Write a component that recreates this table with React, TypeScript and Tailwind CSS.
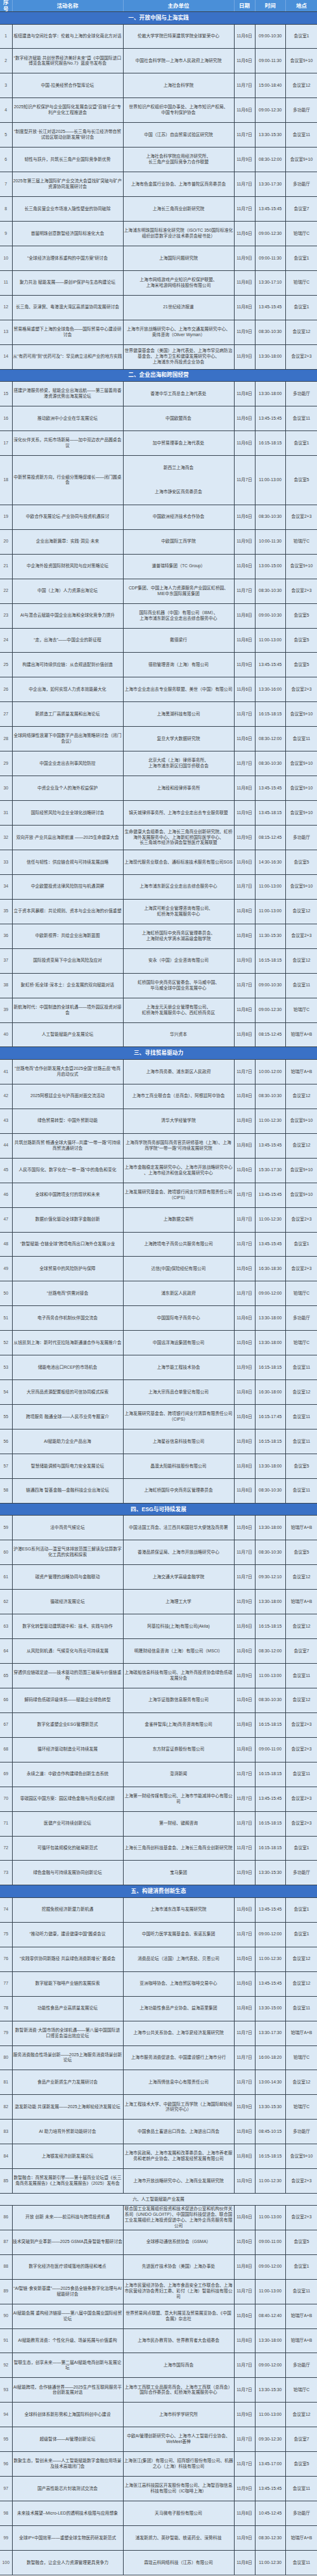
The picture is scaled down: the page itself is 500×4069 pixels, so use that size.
import React from "react";

type Row = [string, string, string, string, string, string];
type Item = { sec: string; light?: boolean } | { row: Row; split?: [string, string] };

const S = (sec: string, light?: boolean): Item => ({ sec, light });
const R = (n: string, t: string, o: string, d: string, tm: string, p: string): Item => ({ row: [n, t, o, d, tm, p] });

const data: Item[] = [
  S("一、开放中国与上海实践"),
  R("1", "枢纽建造与空间社会学：伦敦与上海的全球化南北方对话", "伦敦大学学院巴特莱建筑学院全球繁荣中心", "11月6日", "09:00-10:30", "会议室1"),
  R("2", "“数字经济赋能 共创世界经济美好未来”暨《中国国际进口\n博览会发展研究报告No.7》蓝皮书发布会", "中国社会科学院—上海市人民政府上海研究院", "11月6日", "09:00-11:30", "会议室9+10"),
  R("3", "中国-拉美经贸合作智库论坛", "上海社会科学院", "11月7日", "15:00-18:40", "会议室12"),
  R("4", "2025知识产权保护与企业国际化发展会议暨“百链千企”专\n利产业化工程推进会", "世界知识产权组织中国办事处、上海市知识产权局、\n中国专利保护协会", "11月6日", "09:00-12:30", "多功能厅"),
  R("5", "“制度型开放·长江对话2025——长三角与长江经济带自贸\n试验区联动创新发展”研讨会", "中国（江苏）自由贸易试验区研究院", "11月7日", "13:30-15:30", "会议室11"),
  R("6", "韧性与跃升，共筑长三角产业国际竞争新优势", "上海社会科学院应用经济研究所、\n长三角产业国际竞争力合作联盟", "11月9日", "08:30-12:00", "会议室9+10"),
  R("7", "2025年第三届上海国际矿产业交流大会暨找矿突破与矿产\n资源协同发展研讨会", "上海有色金属行业协会、上海市普陀区商务委员会", "11月7日", "13:30-17:30", "多功能厅"),
  R("8", "长三角民营企业市场准入隐性壁垒的协同破除", "上海长三角商业创新研究院", "11月7日", "13:45-15:45", "会议室7"),
  R("9", "首届明珠创意数智经济国际标准化大会", "上海浦东明珠国际标准化研究院（ISO/TC 350国际标准化\n组织创意数字设计技术委员会秘书处）", "11月6日", "09:00-12:30", "铂瑞厅C"),
  R("10", "“全球经济治理体系重构的中国方案”研讨会", "上海国际问题研究院", "11月9日", "09:00-11:30", "会议室1"),
  R("11", "聚力共治 赋能发展——原创IP保护与生态构建论坛", "上海市网络游戏产业知识产权保护联盟、\n上海米哈游网络科技股份有限公司", "11月8日", "13:30-17:10", "铂瑞厅C"),
  R("12", "长三角、京津冀、粤港澳大湾区高质量协同发展研讨会", "21世纪经济报道", "11月8日", "13:45-15:45", "会议室1"),
  R("13", "贸易格局重塑下上海的全球角色——国际贸易中心建设研\n讨会", "上海市开放战略研究中心、上海市交通发展研究中心、\n奥纬咨询（Oliver Wyman）", "11月9日", "08:30-10:30", "会议室12"),
  R("14", "从“有药可用”到“优药可及”：罕见病立法和产业的地方实践", "世界健康基金会（美国）上海代表处、上海市罕见病防治\n基金会、上海市卫生和健康发展研究中心、\n上海浦东外商投资企业协会", "11月9日", "13:30-18:00", "会议室2+3"),
  S("二、企业出海和跨国经营"),
  R("15", "搭建沪港服务桥梁，赋能企业出海远航——第三届善用香\n港资源优势出海发展论坛", "香港中华工商总会上海代表处", "11月8日", "13:30-18:00", "多功能厅"),
  R("16", "推动欧洲中小企业在华发展论坛", "中国欧盟商会", "11月6日", "13:45-15:45", "会议室11"),
  R("17", "深化伙伴关系，共拓市场新局——加中双边农产品圆桌会\n议", "加中贸易理事会上海代表处", "11月6日", "16:15-18:15", "会议室1"),
  { row: ["18", "中新贸易投资新方向，行业细分策略促增长——闭门圆桌\n会", "", "11月7日", "11:00-13:00", "会议室5"], split: ["新西兰上海商会", "上海市静安区商务委员会"] },
  R("19", "中欧合作发展论坛-产业协同与投资机遇探讨", "中国欧洲经济技术合作协会", "11月6日", "08:30-10:30", "会议室2+3"),
  R("20", "企业出海新篇章：实践·洞见·未来", "中欧国际工商学院", "11月9日", "10:00-11:30", "铂瑞厅C"),
  R("21", "中企海外投资国际财税风险与应对策略论坛", "道普瑞特集团（TC Group）", "11月6日", "13:00-15:00", "会议室9+10"),
  R("22", "中国（上海）人力资源出海论坛", "CDP集团、中国上海人力资源服务产业园区虹桥园、\nMIE中东国际展览集团", "11月7日", "08:30-10:30", "会议室2+3"),
  R("23", "AI与混合云赋能中国企业出海和全球化竞争力提升", "国际商业机器（中国）有限公司（IBM）、\n上海市浦东新区企业走出去综合服务中心", "11月8日", "09:00-10:30", "会议室5"),
  R("24", "“走，出海去”——中国企业的新征程", "戴德梁行", "11月8日", "11:00-13:00", "会议室5"),
  R("25", "构建出海可持续供应链：从合规适配到价值创造", "德勤管理咨询（上海）有限公司", "11月9日", "13:45-15:45", "会议室5"),
  R("26", "中企出海，如何实现人力资本效能最大化", "上海市企业走出去专业服务联盟、美世（中国）有限公司", "11月6日", "13:30-16:00", "会议室2+3"),
  R("27", "新质造工厂高质量发展和出海论坛", "上海黑湖科技有限公司", "11月7日", "16:15-18:15", "会议室9+10"),
  R("28", "全球网络弹性浪潮下中国数字产品出海策略研讨会（闭门\n会议）", "复旦大学大数据研究院", "11月6日", "08:30-12:00", "会议室11"),
  R("29", "中国企业走出去刑事风险防控", "北京大成（上海）律师事务所、\n上海市浦东新区归国华侨联合会", "11月7日", "08:30-10:30", "会议室9+10"),
  R("30", "中资企业及个人的海外权益保护", "上海段和段律师事务所", "11月8日", "13:45-15:45", "会议室9+10"),
  R("31", "国际经贸风险与企业全球化战略研讨会", "锦天城律师事务所、上海市企业走出去专业服务联盟", "11月9日", "13:45-18:15", "会议室9+10"),
  R("32", "双向开放·产业共赢出海新航道 ——2025生命健康大会", "生命健康大会组委会、上海长三角商业创新研究院、虹桥\n海外发展服务中心、上海新虹桥国际医学中心、\n长三角城市经济协调会智慧医疗发展联盟", "11月9日", "08:15-12:45", "多功能厅"),
  R("33", "信任与韧性：供应链合规与可持续发展战略", "上海现代服务业联合会、通标标准技术服务有限公司SGS", "11月6日", "14:30-16:30", "会议室5"),
  R("34", "中企欧盟投资法律风险防控与机遇洞察", "上海市浦东新区企业走出去综合服务中心", "11月7日", "11:00-13:00", "会议室9+10"),
  R("35", "立于资本风暴眼：共论规则、资本与企业出海的价值重塑", "上海宾可斯企业管理咨询有限公司、\n虹桥海外发展服务中心", "11月8日", "11:00-13:00", "会议室12"),
  R("36", "中欧新视界：共绘企业出海新蓝图", "上海虹桥国际中央商务区管理委员会、\n上海财经大学滴水湖高级金融学院", "11月8日", "11:30-15:30", "会议室2+3"),
  R("37", "国际投资变局下中企出海风险及应对", "安永（中国）企业咨询有限公司", "11月9日", "16:15-18:15", "会议室12"),
  R("38", "聚虹桥·拓全球·深本土：企业发展的双向赋能对话", "虹桥国际中央商务区管委会、毕马威中国、\n毕马威全球中国业务发展中心", "11月7日", "09:00-10:30", "会议室11"),
  R("39", "新航海时代：中国制造的全球机遇——境外园区投资对接\n会", "上海龙元天册企业管理有限公司、\n虹桥海外发展服务中心、西虹桥商务区", "11月8日", "09:00-12:30", "铂瑞厅C"),
  R("40", "人工智能赋能产业发展论坛", "华兴资本", "11月8日", "08:15-12:45", "铂瑞厅A+B"),
  S("三、寻找贸易驱动力"),
  R("41", "“丝路电商”合作创新发展大会暨2025全国“丝路云品”电商\n月启动仪式", "上海市商务委、浦东新区人民政府", "11月7日", "10:00-12:00", "铂瑞厅A+B"),
  R("42", "2025阿根廷企业与沪商面对面交流活动", "上海市工商业联合会（总商会）、阿根廷阿中协会", "11月8日", "08:30-10:30", "会议室12"),
  R("43", "绿色贸易转型：中国外贸新动能", "清华大学经管学院", "11月8日", "11:00-12:30", "会议室9+10"),
  R("44", "共筑丝路新商贸 畅通全球大循环--共建“一带一路”可持续\n商贸流通研讨会", "上海商学院商务部国际商务官员研修基地（上海）、上海\n商学院“一带一路”可持续发展研究院", "11月8日", "13:45-15:45", "会议室12"),
  R("45", "人民币国际化、数字化在“一带一路”中的角色和变化", "上海市金融稳定发展研究中心、上海市开放战略研究中心\n、上海市经济和信息化发展研究中心", "11月6日", "15:30-17:30", "会议室9+10"),
  R("46", "全球和中国跨境支付的现状和未来", "上海发展研究基金会、跨境银行间支付清算有限责任公司\n（CIPS）", "11月7日", "13:45-15:45", "会议室9+10"),
  R("47", "数据价值化驱动全球数字金融创新", "上海数据交易所", "11月7日", "11:00-12:30", "会议室2+3"),
  R("48", "“数智赋能·仓链全球”跨境电商出口海外仓发展沙龙", "上海跨境电子商务公共服务有限公司", "11月7日", "13:45-15:45", "会议室1"),
  R("49", "全球贸易中的风险防护与保障", "达信(中国)保险经纪有限公司", "11月6日", "16:30-18:30", "会议室2+3"),
  R("50", "“丝路电商”供需对接会", "浦东新区人民政府", "11月7日", "09:00-12:00", "铂瑞厅C"),
  R("51", "电子商务合作机制伙伴国交流会", "中国国际电子商务中心", "11月6日", "13:30-18:00", "多功能厅"),
  R("52", "从钱凯到上海：新时代亚拉陆海新通道合作与发展推介会", "中国远洋海运集团有限公司", "11月6日", "13:30-18:00", "铂瑞厅C"),
  R("53", "储能电池出口RCEP的市场机会", "上海节能工程技术协会", "11月9日", "16:15-18:15", "会议室11"),
  R("54", "大宗商品资源配置枢纽的可信协同模式探索", "上海大宗商品仓单登记有限公司", "11月8日", "16:30-18:00", "会议室12"),
  R("55", "跨境服务 融通全球——人民币业务专题宣介", "上海发展研究基金会、跨境银行间支付清算有限责任公司\n（CIPS）", "11月6日", "16:15-17:45", "会议室11"),
  R("56", "AI赋能助力企业产品出海", "上海星谷信息科技有限公司", "11月8日", "16:15-18:15", "会议室11"),
  R("57", "智慧储能调频与国际电力安全发展论坛", "晶澳太阳能科技股份有限公司", "11月8日", "13:30-18:00", "会议室5"),
  R("58", "链通四海 智荟金融—金融科技企业出海论坛", "上海虹桥国际中央商务区管理委员会", "11月8日", "08:30-10:30", "会议室11"),
  S("四、ESG与可持续发展"),
  R("59", "法中商务气候论坛", "中国法国工商会、法兰西共和国驻华大使馆及商务署", "11月6日", "13:30-18:00", "铂瑞厅A+B"),
  R("60", "沪港ESG系列活动—温室气体排放范围三解读及估算数字\n化工具的实践和探索", "香港品质保证局、上海市开放战略研究中心", "11月7日", "08:30-10:30", "会议室5"),
  R("61", "碳资产管理的战略协同与金融联动", "上海交通大学高级金融学院", "11月7日", "09:30-12:10", "会议室12"),
  R("62", "循碳经济发展论坛", "上海理工大学", "11月9日", "13:30-18:00", "铂瑞厅A+B"),
  R("63", "数字化转型驱动建筑碳中和：技术、实践与协作", "阿基拉科技(上海)有限公司(Akila)", "11月6日", "16:15-18:15", "会议室12"),
  R("64", "从风险到机遇：气候变化与商业可持续发展", "明晟财经信息咨询（上海）有限公司（MSCI）", "11月6日", "08:30-12:00", "会议室7"),
  R("65", "穿透供应链碳足迹——技术驱动的范围三破局与价值链重\n构", "上海碳船信息科技有限公司、上海外商投资协会绿色低碳\n发展分会", "11月9日", "11:00-13:00", "会议室11"),
  R("66", "解码绿色低碳评级体系——赋能企业绿色转型", "上海华证指数信息服务有限公司", "11月6日", "08:30-10:30", "会议室12"),
  R("67", "数字化重塑企业ESG管理新范式", "金雀梓智库(上海)商务咨询有限公司", "11月8日", "16:15-18:15", "会议室2+3"),
  R("68", "循环经济驱动制造业可持续发展", "东方财富证券股份有限公司", "11月8日", "09:00-11:00", "会议室2+3"),
  R("69", "永续之道：中欧合作构建绿色创新生态系统", "澎湃新闻", "11月7日", "16:15-18:15", "会议室11"),
  R("70", "零碳园区中国方案：园区绿色金融与商业模式创新", "上海第一财经传媒有限公司、上海市节能减排中心有限公\n司", "11月7日", "13:45-15:45", "会议室2+3"),
  R("71", "医健产业可持续创新论坛", "第一财经、键阁咨询", "11月7日", "16:15-18:15", "会议室2+3"),
  R("72", "可循环包装规模化的破局新范式", "上海长三角商创科技基金会、上海长三角商业创新研究院", "11月7日", "16:15-18:15", "会议室1"),
  R("73", "绿色金融与可持续发展协同创新论坛", "宝马集团", "11月9日", "13:30-15:30", "多功能厅"),
  S("五、构建消费创新生态"),
  R("74", "挖掘免税经济新潜力新机遇", "上海市浦东改革与发展研究院", "11月6日", "13:45-15:45", "会议室1"),
  R("75", "“推动听力健康，建设健康中国”圆桌会议", "中国听力医学发展基金会、索诺瓦集团", "11月7日", "09:00-12:00", "会议室1"),
  R("76", "“实践零供协同新路径 共赢绿色消费新增长” 圆桌会", "消费品论坛（法国）上海代表处、贝恩公司", "11月6日", "11:00-12:30", "会议室12"),
  R("77", "数字赋能下咖啡产业链的发展探索", "亚洲咖啡协会、上海自贸区咖啡交易中心", "11月6日", "13:45-15:45", "会议室12"),
  R("78", "功能性食品产业高质量发展论坛", "上海功能性食品产业协会、益海嘉里集团", "11月8日", "13:30-15:00", "会议室11"),
  R("79", "数智新消费·大国市场的全球机遇——第八届中国国际进\n口博览会溢出效应论坛", "上海市公共关系协会、上海华夏经济发展研究院", "11月7日", "13:30-17:30", "铂瑞厅A+B"),
  R("80", "服务消费融合性场景创新——2025上海服务消费场景创新\n论坛", "上海市服务消费促进会、中国建设银行上海市分行", "11月7日", "16:00-18:20", "铂瑞厅C"),
  R("81", "食品产业新质生产力发展研讨会", "上海商情信息中心有限责任公司", "11月7日", "13:00-14:30", "会议室12"),
  R("82", "激发新动能 共谋新发展——2025上海邮轮经济发展论坛", "上海工程技术大学、中欧国际工商学院（上海国际邮轮经\n济研究中心）", "11月9日", "13:30-15:30", "铂瑞厅C"),
  R("83", "AI 助力培育外贸新动能研讨会", "中国食品土畜进出口商会、上海进出口商会", "11月8日", "08:45-10:15", "多功能厅"),
  R("84", "上海银发经济创新发展论坛", "上海市民政局、上海市发展和改革委员会、上海市养老服\n务和老龄产业协会、上海银发经贸发展有限公司", "11月8日", "16:15-18:15", "会议室9+10"),
  R("85", "数智融合：商贸发展新引擎——第十届商业论坛暨《长三\n角商务发展报告》《上海商业发展报告》（2025）发布会", "上海市开放战略研究中心、上海商业发展研究院", "11月9日", "11:00-12:30", "会议室2+3"),
  S("六、人工智能赋能产业发展", true),
  R("86", "开放 创新 未来——前沿科技与跨境投资机遇", "联合国工业发展组织投资和技术促进办公室和机构伙伴关\n系司（UNIDO GLO/ITP）、中国国际科技促进会、联合国\n工业发展组织上海投资促进中心、上海外企商务服务有限\n公司", "11月6日", "11:00-13:00", "会议室2+3"),
  R("87", "技术突破到产业革新——2025 GSMA具身智能专题研讨会", "全球移动通信系统协会（GSMA）", "11月6日", "09:00-11:00", "会议室5"),
  R("88", "数字化经济在医疗领域落地的路径和堵点", "先进医疗技术协会（美国）上海办事处", "11月8日", "09:00-12:00", "会议室1"),
  R("89", "“AI智链·食安新基建”——2025食品全链条数字化治理与AI\n赋能研讨会", "上海市民营经济协会、上海市食品安全工作联合会、上海\n市民营经济协会青妇工委、彩付（上海）智能科技有限公\n司", "11月7日", "11:00-13:00", "会议室11"),
  R("90", "AI赋能会展 重构经济链接——第八届中国会展业国际经贸\n论坛", "世界贸易网点联盟、意大利展览及贸易展览协会、《中国\n会展》杂志社", "11月6日", "08:40-12:40", "铂瑞厅A+B"),
  R("91", "AI赋能教育消费：个性化升级、场景拓展与价值重构", "上海市民办教育协、世界教育者大会组委会", "11月8日", "13:30-18:00", "铂瑞厅A+B"),
  R("92", "智联生态，创享未来——第二届AI赋能电商创新与发展论\n坛", "上海市国际商会", "11月7日", "09:00-12:00", "多功能厅"),
  R("93", "AI赋能跨境，合作链通世界——2025生产性互联网服务平\n台创新发展对话", "上海市工商联工业品服务商会、上海市工商联（总商会）\n国际合作委员会、虹桥海外发展服务中心", "11月7日", "13:30-15:30", "铂瑞厅C"),
  R("94", "全球科创体系新形势和上海国际科创中心建设", "上海市科学学研究所", "11月9日", "11:00-13:00", "会议室12"),
  R("95", "超级智体——AI管理创新论坛", "中欧AI管理创新研究中心、上海市人工智能行业协会、\nWeMeet荟神", "11月7日", "09:30-12:30", "会议室7"),
  R("96", "数聚生态，智创未来——人工智能赋能数字金融应用场景\n及技术高端闭门会", "上海张江(集团）有限公司、招商银行股份有限公司、机器\n之心（上海）科技有限公司", "11月7日", "13:45-17:00", "会议室5"),
  R("97", "国产高性能芯片封装测试交流会", "上海张江高科技园区开发股份有限公司、上海智百咖信息\n科技有限公司（IC咖啡上海）", "11月9日", "13:45-15:45", "会议室11"),
  R("98", "未来技术展望--Micro-LED的透明技术极限与应用想象", "天马微电子股份有限公司", "11月8日", "10:45-12:45", "多功能厅"),
  R("99", "全球IP+中国效率——重塑全球生物医药研发新范式", "浦发新质力、英矽智能、轶诺药业、深势科技", "11月9日", "08:30-12:30", "铂瑞厅A+B"),
  R("100", "数智融合，让企业人力资源管理更具竞争力", "霖珑云科网络科技（江苏）有限公司", "11月8日", "11:00-12:30", "会议室11"),
];

const GRID = "grid grid-cols-[19.5px_175px_175px_33px_48.5px_49px]";
const CELL = "flex items-center justify-center text-center whitespace-pre border-r border-[#34414e]";

function DataRow({ item }: { item: { row: Row; split?: [string, string] } }) {
  const [n, t, o, d, tm, p] = item.row;
  const tall = !!item.split;
  return (
    <div className={`${GRID} ${tall ? "h-[77.9px]" : "h-[38.95px]"} border-b border-[#34414e] bg-[#dce9f5] text-[#3d3d3d]`}>
      <div className={`${CELL} text-[#555]`}>{n}</div>
      <div className={CELL}>{t}</div>
      {item.split ? (
        <div className="flex flex-col border-r border-[#34414e]">
          <div className="flex flex-1 items-center justify-center text-center">{item.split[0]}</div>
          <div className="flex flex-1 items-center justify-center text-center">{item.split[1]}</div>
        </div>
      ) : (
        <div className={CELL}>{o}</div>
      )}
      <div className={CELL}>{d}</div>
      <div className={CELL}>{tm}</div>
      <div className="flex items-center justify-center text-center whitespace-pre">{p}</div>
    </div>
  );
}

export default function App() {
  return (
    <div className="w-[500px] bg-[#dce9f5] font-['Liberation_Sans','Noto_Sans_CJK_SC',sans-serif] text-[6.8px] leading-[8.8px]">
      <div className={`${GRID} h-[19px] border-b border-[#34414e] bg-[#4a8fd8] text-[8.5px] font-bold text-white`}>
        <div className="flex items-center justify-center overflow-hidden whitespace-pre-line text-center leading-[10px] border-r border-[#74a8e2]">{"序\n号"}</div>
        <div className="flex items-center justify-center border-r border-[#74a8e2]">活动名称</div>
        <div className="flex items-center justify-center border-r border-[#74a8e2]">主办单位</div>
        <div className="flex items-center justify-center border-r border-[#74a8e2]">日期</div>
        <div className="flex items-center justify-center border-r border-[#74a8e2]">时间</div>
        <div className="flex items-center justify-center">地点</div>
      </div>
      {data.map((it, i) =>
        "sec" in it ? (
          it.light ? (
            <div key={i} className="flex h-[18.7px] items-center justify-center border-b border-[#34414e] bg-[#dce9f5] text-[#3d3d3d]">
              {it.sec}
            </div>
          ) : (
            <div key={i} className="flex h-[19.5px] items-center justify-center border-b border-[#34414e] bg-[#3a71c6] text-[8.7px] font-bold text-white">
              {it.sec}
            </div>
          )
        ) : (
          <DataRow key={i} item={it} />
        )
      )}
    </div>
  );
}
